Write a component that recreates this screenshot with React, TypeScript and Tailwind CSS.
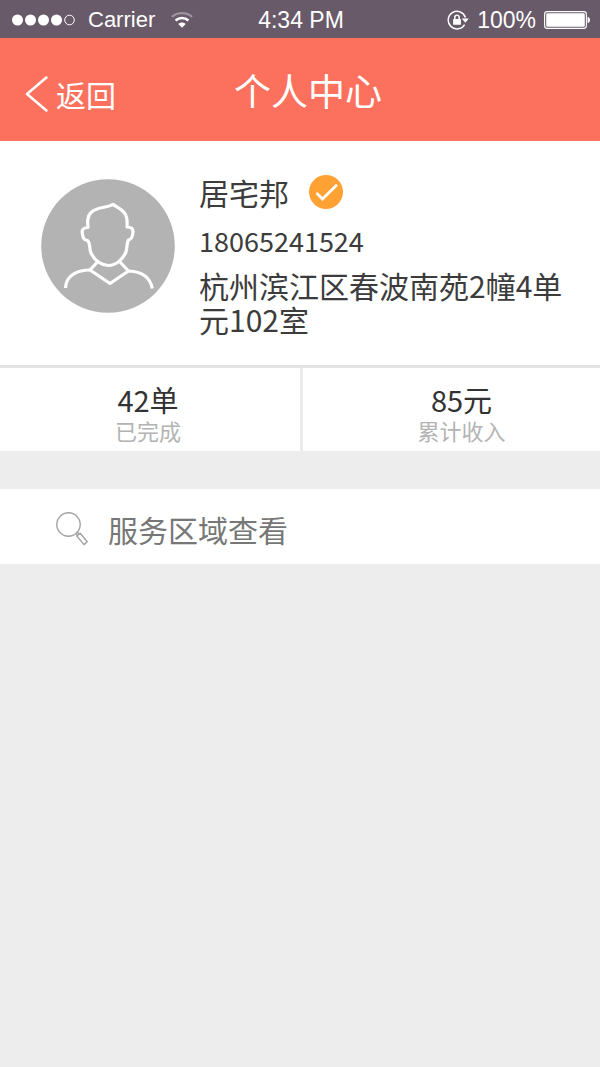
import type { ReactNode } from "react";

const stats = [
  { value: "42单", label: "已完成" },
  { value: "85元", label: "累计收入" },
];

const StatusBar = () => (
  <div className="grid h-[38px] grid-cols-[1fr_auto_1fr] items-center bg-[#685a69] pt-[2px] pr-[10px] pl-3 font-['Liberation_Sans',sans-serif] text-[23px] leading-6 text-white">
    <div className="flex items-center">
      <svg width="64" height="12" viewBox="0 0 64 12" fill="#fff">
        <circle cx="5.5" cy="6" r="5.5" />
        <circle cx="18.5" cy="6" r="5.5" />
        <circle cx="31.5" cy="6" r="5.5" />
        <circle cx="44.5" cy="6" r="5.5" />
        <circle cx="57.5" cy="6" r="4.8" fill="none" stroke="#fff" strokeWidth="1" />
      </svg>
      <span className="ml-3 text-[22px]">Carrier</span>
      <svg className="ml-4" width="22" height="18" viewBox="0 0 24 18" fill="none" stroke="#fff">
        <path d="M1 5.6C7 .2 17 .2 23 5.6" strokeWidth="2.4" opacity=".35" />
        <path d="M5 9.6c4-3.7 10-3.7 14 0" strokeWidth="2.8" />
        <path d="M8 13.4c2.2-2.2 5.8-2.2 8 0L12 17.5z" fill="#fff" stroke="none" />
      </svg>
    </div>
    <span>4:34 PM</span>
    <div className="flex items-center justify-end">
      <svg width="22" height="20" viewBox="0 0 22 20" fill="none" stroke="#fff" strokeWidth="1.5">
        <path d="M18.4 7.4A8.8 8.8 0 1 0 17.6 14.6" />
        <path d="M14.8 8.6h7l-3.5 4.2z" fill="#fff" stroke="none" />
        <rect x="6.1" y="9" width="7.8" height="5.8" rx=".6" fill="#fff" stroke="none" />
        <path d="M7.8 9.4V7.4a2.2 2.2 0 0 1 4.4 0v2" />
      </svg>
      <span className="ml-2">100%</span>
      <svg className="ml-2" width="46" height="18" viewBox="0 0 46 18" fill="#fff">
        <rect x=".6" y=".6" width="41.8" height="16.8" rx="2.6" fill="none" stroke="#fff" strokeWidth="1.1" />
        <rect x="2.2" y="2.2" width="38.6" height="13.6" rx="1.4" />
        <path d="M43.6 5.8c3.2 1 3.2 5.4 0 6.4z" />
      </svg>
    </div>
  </div>
);

const Header = () => (
  <header className="grid h-[103px] grid-cols-[1fr_auto_1fr] items-center bg-[#fc715d] pl-6 pr-2 text-white">
    <button type="button" className="flex items-center gap-2 pt-2 text-left text-[30px] leading-10">
      <svg width="24" height="36" viewBox="0 0 24 36" fill="none" stroke="#fff" strokeWidth="2.6">
        <path d="M22.4 1.6 3 18l19.4 16.4" strokeLinecap="round" strokeLinejoin="round" />
      </svg>
      返回
    </button>
    <h1 className="text-[37px] leading-[48px]">个人中心</h1>
  </header>
);

const Avatar = () => (
  <svg className="shrink-0" width="134" height="134" viewBox="0 0 134 134" fill="none">
    <circle cx="67" cy="67" r="66.8" fill="#b3b3b3" />
    <g stroke="#fff" strokeWidth="3.2" strokeLinejoin="round">
      <path d="M72 25.3C66 29.5 57 27 50 33.5C46 37.5 46.5 43 47 48.5C43 48.5 40.5 50.5 41.3 54C42 58.5 42 60.5 46.5 61.5C49.5 64 48 69 50 74C54 82.5 60 86 67.5 86.5C75 86.5 82 80 85 73C86.5 68 85.5 64 87.5 61C91 60 92 56 92 52.5C92 49 89.5 48 86 48C86.5 42 86.5 38 83.5 34C80 29.5 76 28.5 72 25.3Z" />
      <path d="M56 83.5 49 91 69 104.5 87.5 92 79 83" />
      <path d="M49 91C38 91 25 95.5 24.5 109M87.5 92C99 92.5 109 97 111.3 109.5" />
    </g>
  </svg>
);

const VerifiedBadge = () => (
  <svg width="34" height="34" viewBox="0 0 34 34" fill="none">
    <circle cx="17" cy="17" r="17" fill="#ffa133" />
    <path d="M7.5 18 13.5 24 28 9.8" stroke="#fff" strokeWidth="2.8" />
  </svg>
);

const Profile = () => (
  <section className="flex gap-6 border-b-[3px] border-[#e2e2e2] bg-white pt-[30px] pr-8 pb-[29px] pl-[41px] text-[#3c3c3c]">
    <div className="pt-2">
      <Avatar />
    </div>
    <div className="min-w-0 flex-1">
      <div className="flex h-[42px] items-center gap-5">
        <h2 className="text-[30px] leading-[42px]">居宅邦</h2>
        <VerifiedBadge />
      </div>
      <p className="pt-2 text-[27px] leading-10">18065241524</p>
      <p className="pt-[7px] text-[30px] leading-[34px]">杭州滨江区春波南苑2幢4单元102室</p>
    </div>
  </section>
);

const Stats = () => (
  <dl className="grid grid-cols-2 bg-white text-center">
    {stats.map((stat) => (
      <div
        key={stat.label}
        className="flex flex-col-reverse border-[#ebebeb] pt-3 pb-[9px] odd:pr-1 even:border-l-[3px] even:pl-5"
      >
        <dt className="text-[22px] leading-6 text-[#b3b3b3]">{stat.label}</dt>
        <dd className="text-[29px] leading-[38px] text-[#333]">{stat.value}</dd>
      </div>
    ))}
  </dl>
);

const MenuLink = ({ icon, children }: { icon: ReactNode; children: ReactNode }) => (
  <a href="#area" className="flex h-[75px] items-center gap-5 bg-white pt-1 pl-14 text-[30px] leading-10 text-[#777]">
    {icon}
    {children}
  </a>
);

const SearchIcon = () => (
  <svg width="32" height="34" viewBox="0 0 32 34" fill="none" stroke="#a3a3a3" strokeWidth="1.4">
    <circle cx="12.5" cy="12.5" r="11.7" />
    <path d="m20 21.5 1.8 2.2M21.6 20.2l1.8 2" />
    <path d="m20.8 24 3.4-2.8 7 8.6-3.2 2.8z" strokeLinejoin="round" />
  </svg>
);

const App = () => {
  return (
    <div className="min-h-screen bg-[#ededed] font-['Noto_Sans_CJK_SC',sans-serif]">
      <StatusBar />
      <Header />
      <main>
        <Profile />
        <Stats />
        <nav className="mt-[38px]">
          <MenuLink icon={<SearchIcon />}>服务区域查看</MenuLink>
        </nav>
      </main>
    </div>
  );
};

export default App;
